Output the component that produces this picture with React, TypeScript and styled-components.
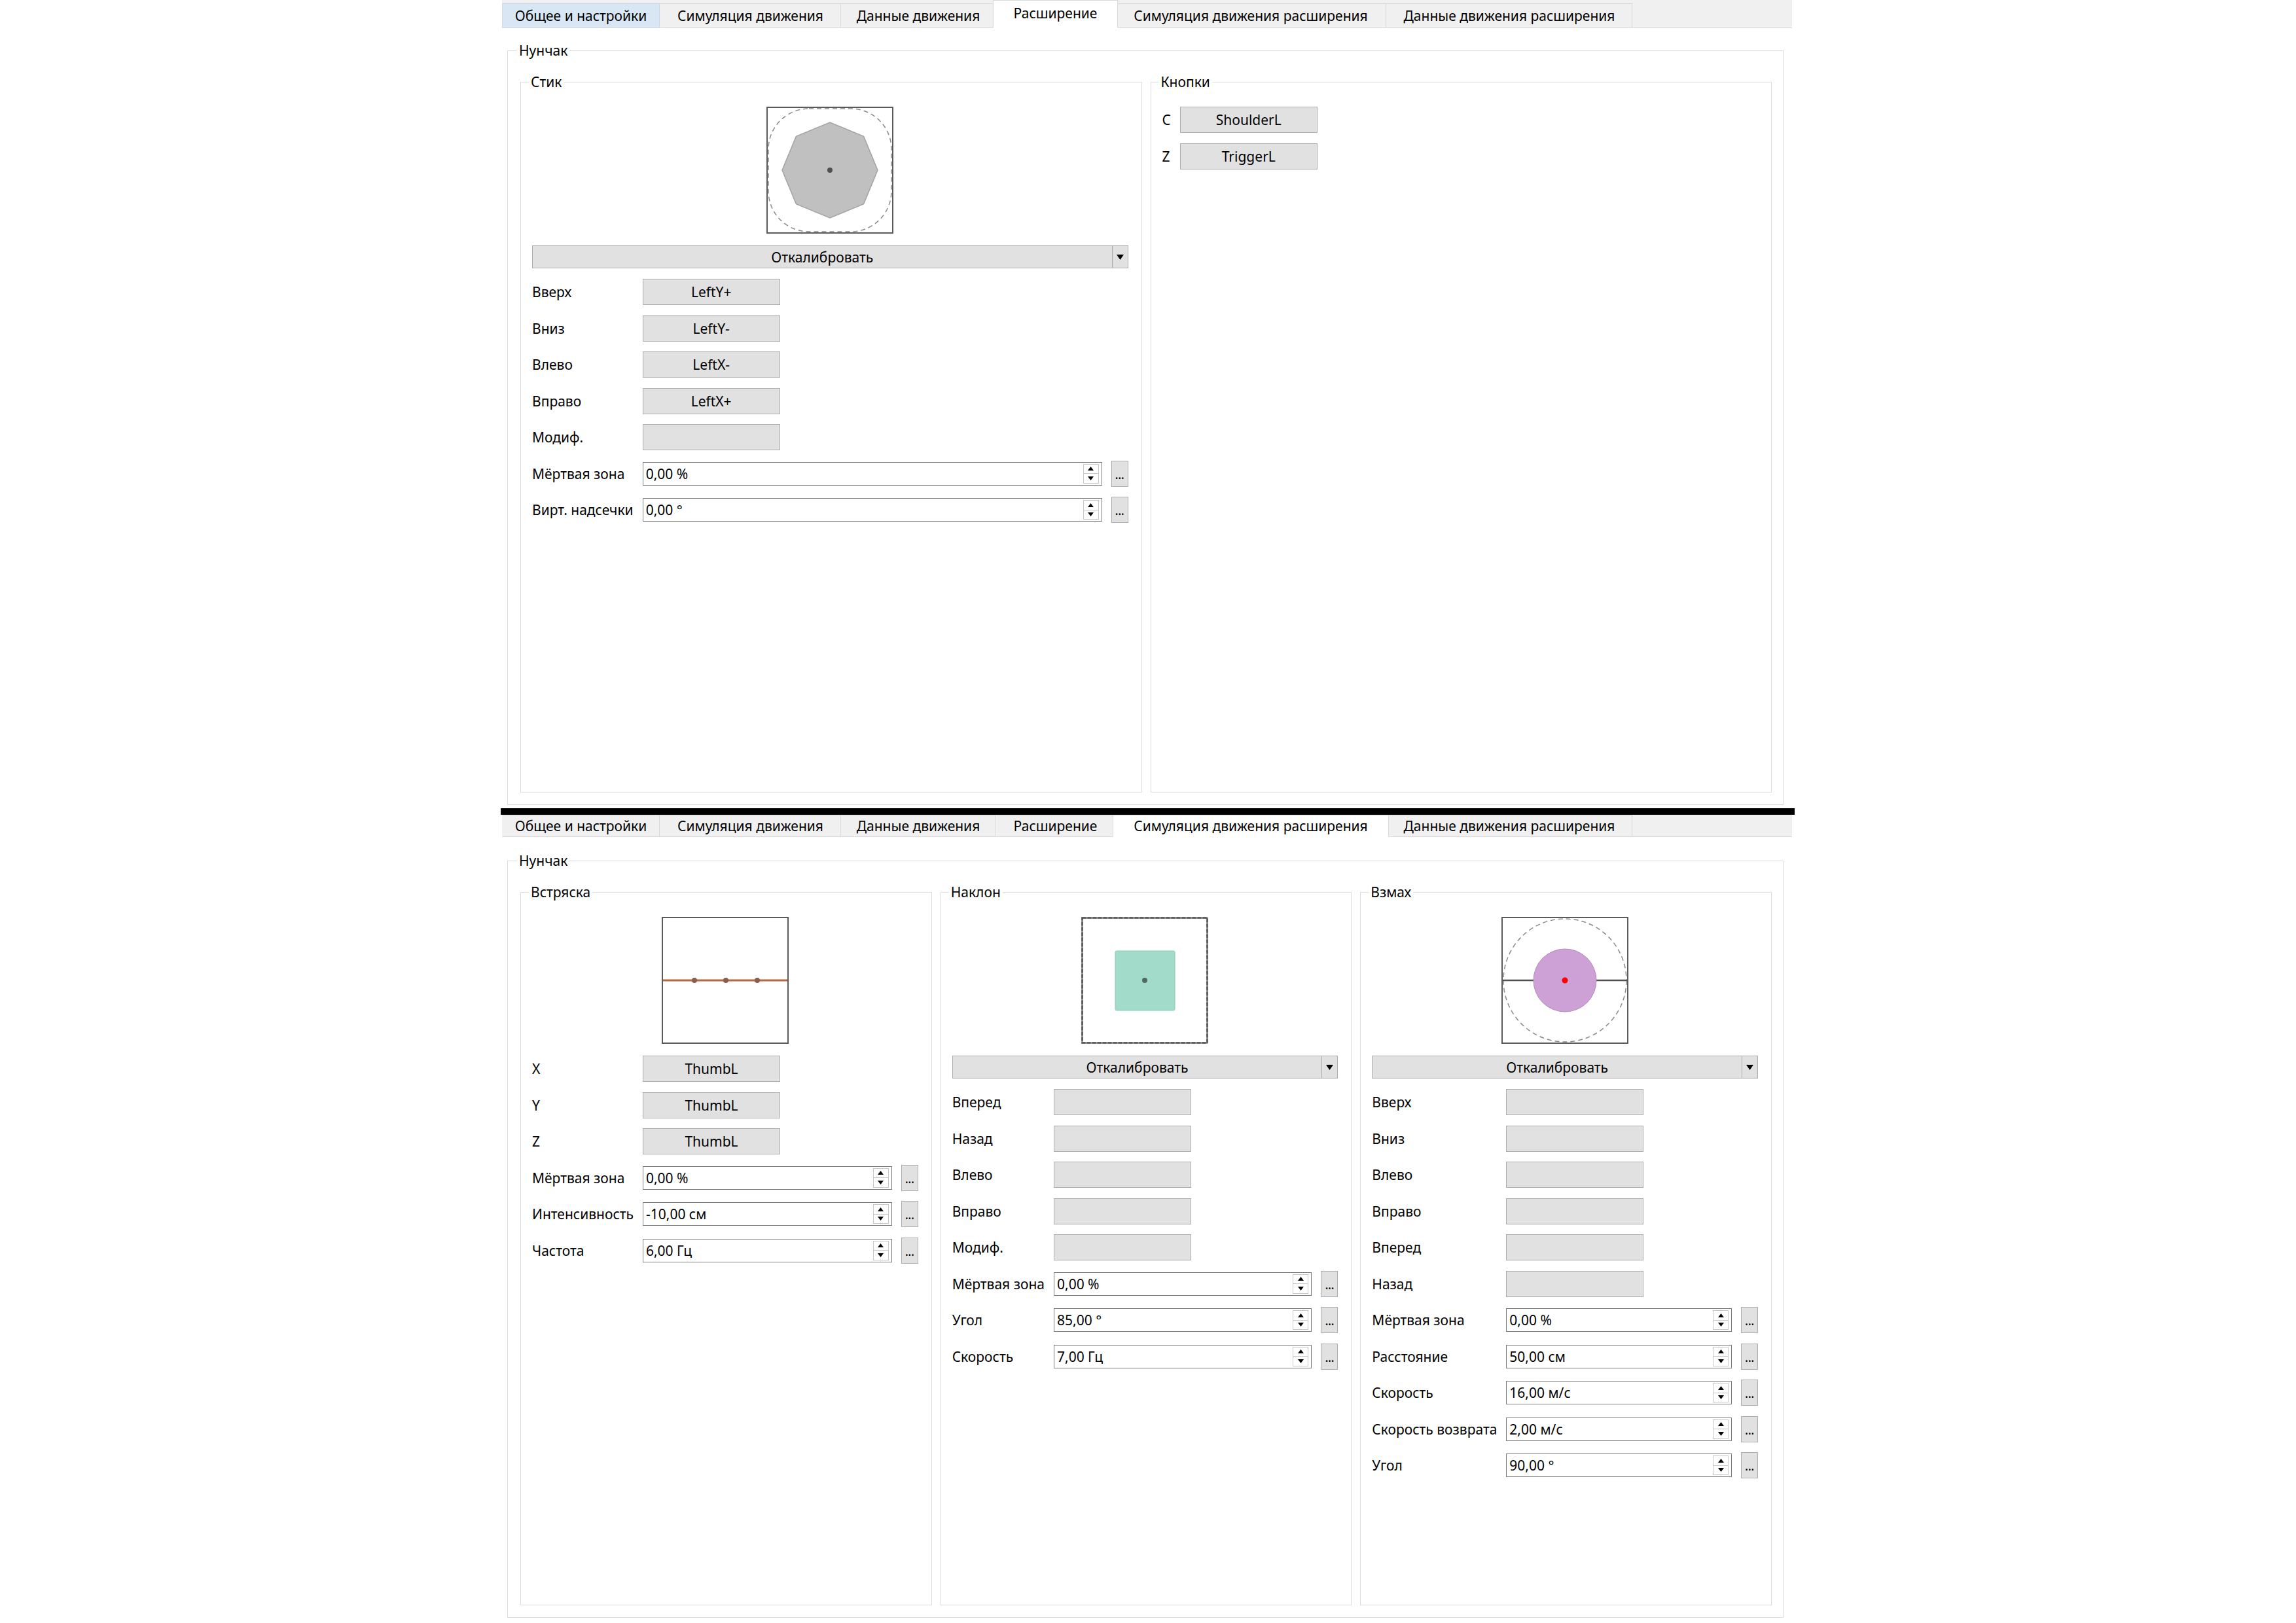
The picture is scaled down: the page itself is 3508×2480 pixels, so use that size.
import React from "react";
import styled, { createGlobalStyle } from "styled-components";

const Global = createGlobalStyle`
  html, body { margin: 0; padding: 0; background: #fff; }
  body {
    font-family: "Noto Sans", "Open Sans", sans-serif;
    font-size: 21px;
    color: #000;
  }
  * { box-sizing: border-box; }
`;

const Page = styled.div`
  width: 1977px;
  margin-left: 765px;
  display: flex;
  flex-direction: column;
`;

const Screen = styled.section`
  height: 1235px;
  padding: 0 4px 0 2px;
  display: flex;
  flex-direction: column;
`;

const Divider = styled.div`
  height: 10px;
  background: #000;
  flex: none;
`;

const TabBar = styled.div<{ $h: number }>`
  height: ${(p) => p.$h}px;
  flex: none;
  background: #f0f0f0;
  display: flex;
  align-items: flex-end;
  overflow: hidden;
  box-shadow: inset 0 -1px 0 #d9d9d9;
`;

const Tab = styled.div<{ $w: number; $h: number; $active?: boolean; $hover?: boolean }>`
  flex: none;
  width: ${(p) => p.$w + (p.$active ? 8 : 0)}px;
  margin: 0 ${(p) => (p.$active ? -4 : 0)}px;
  height: ${(p) => p.$h}px;
  display: flex;
  align-items: center;
  justify-content: center;
  padding-bottom: ${(p) => (p.$active && p.$h > 40 ? 3 : 0)}px;
  white-space: nowrap;
  background: ${(p) => (p.$active ? "#fff" : p.$hover ? "#d9e7f4" : "#f0f0f0")};
  border-top: 1px solid ${(p) => (p.$hover ? "#c4d9ee" : "#d9d9d9")};
  border-right: 1px solid ${(p) => (p.$hover ? "#c4d9ee" : "#d9d9d9")};
  border-left: 1px solid ${(p) => (p.$active || p.$hover ? "#d9d9d9" : "transparent")};
  border-bottom: 1px solid ${(p) => (p.$active ? "#fff" : "#d9d9d9")};
  position: relative;
  z-index: ${(p) => (p.$active ? 1 : 0)};
`;

const Content = styled.div<{ $pt: number; $pb: number }>`
  flex: 1;
  min-height: 0;
  background: #fff;
  padding: ${(p) => p.$pt}px 13px ${(p) => p.$pb}px 8px;
  display: flex;
`;

const Group = styled.fieldset<{ $pad: string }>`
  flex: 1;
  margin: 0;
  min-width: 0;
  border: 1px solid #dcdcdc;
  padding: ${(p) => p.$pad};
  display: flex;
  flex-direction: column;
`;

const Legend = styled.legend`
  padding: 0 3px;
  margin-left: -5px;
  line-height: 24px;
  font-size: 21px;
`;

const Columns = styled.div<{ $n: number }>`
  flex: 1;
  display: grid;
  grid-template-columns: repeat(${(p) => p.$n}, 1fr);
  column-gap: 13px;
`;

const DiagramWrap = styled.div`
  display: flex;
  justify-content: center;
  margin-bottom: 18px;
  svg { display: block; }
`;

const Calibrate = styled.div`
  height: 35px;
  margin-bottom: 16px;
  display: flex;
  background: #e1e1e1;
  border: 1px solid #adadad;
`;

const CalibrateText = styled.span`
  flex: 1;
  display: flex;
  align-items: center;
  justify-content: center;
`;

const CalibrateArrow = styled.span`
  width: 24px;
  flex: none;
  display: flex;
  align-items: center;
  justify-content: center;
  border-left: 1px solid #adadad;
`;

const Form = styled.div`
  display: grid;
  grid-template-columns: auto 1fr auto;
  grid-auto-rows: 40px;
  column-gap: 14px;
  row-gap: 15.5px;
  align-items: center;
`;

const Label = styled.span`
  white-space: nowrap;
`;

const MapButton = styled.div`
  justify-self: start;
  width: 210px;
  height: 40px;
  background: #e1e1e1;
  border: 1px solid #adadad;
  display: flex;
  align-items: center;
  justify-content: center;
`;

const SpinBox = styled.div`
  height: 36px;
  border: 1px solid #7a7a7a;
  background: #fff;
  display: flex;
  align-items: center;
  padding-left: 4px;
`;

const SpinValue = styled.span`
  flex: 1;
  white-space: nowrap;
`;

const SpinButtons = styled.div`
  width: 24px;
  height: 30px;
  margin-right: 4px;
  display: flex;
  flex-direction: column;
  border: 1px solid #c8c8c8;
`;

const SpinCell = styled.span`
  flex: 1;
  display: flex;
  align-items: center;
  justify-content: center;
  & + & { border-top: 1px solid #c8c8c8; }
`;

const DotsButton = styled.div`
  width: 26px;
  height: 40px;
  background: #e1e1e1;
  border: 1px solid #adadad;
  display: flex;
  align-items: flex-end;
  justify-content: center;
  padding-bottom: 8px;
  font-size: 19px;
  line-height: 19px;
  letter-spacing: -0.5px;
`;

const Empty = styled.span``;

type Row = { kind: "btn" | "spin"; label: string; value: string };
type DiagramKind = "stick" | "shake" | "tilt" | "swing";
interface GroupData {
  title: string;
  diagram?: DiagramKind;
  calibrate?: boolean;
  rows: Row[];
}

const Tri = ({ up, w = 9, h = 6 }: { up?: boolean; w?: number; h?: number }) => (
  <svg width={w} height={h} viewBox={`0 0 ${w} ${h}`}>
    <polygon points={up ? `0,${h} ${w},${h} ${w / 2},0` : `0,0 ${w},0 ${w / 2},${h}`} fill="#000" />
  </svg>
);

const octagon = Array.from({ length: 8 }, (_, i) => {
  const a = (Math.PI / 4) * i - Math.PI / 2;
  return `${(97 + 73 * Math.cos(a)).toFixed(1)},${(97 + 73 * Math.sin(a)).toFixed(1)}`;
}).join(" ");

const Diagram = ({ kind }: { kind: DiagramKind }) => {
  if (kind === "stick")
    return (
      <svg width="194" height="194" viewBox="0 0 194 194">
        <rect x="1" y="1" width="192" height="192" fill="#fff" stroke="#5a5a5a" strokeWidth="2" />
        <rect x="3" y="3" width="188" height="188" rx="62" fill="none" stroke="#8a8a8a" strokeWidth="1.5" strokeDasharray="7 5" />
        <polygon points={octagon} fill="#c0c0c0" stroke="#a4a4a4" strokeWidth="1.5" />
        <circle cx="97" cy="97" r="4" fill="#505050" />
      </svg>
    );
  if (kind === "shake")
    return (
      <svg width="194" height="194" viewBox="0 0 194 194">
        <rect x="1" y="1" width="192" height="192" fill="#fff" stroke="#5a5a5a" strokeWidth="2" />
        <line x1="2" y1="97" x2="192" y2="97" stroke="#b5683f" strokeWidth="3" />
        {[50, 98, 146].map((x) => (
          <circle key={x} cx={x} cy="97" r="4" fill="#8a5e4c" />
        ))}
      </svg>
    );
  if (kind === "tilt")
    return (
      <svg width="194" height="194" viewBox="0 0 194 194">
        <rect x="1.5" y="1.5" width="191" height="191" fill="#fff" stroke="#8a8a8a" strokeWidth="2.5" />
        <rect x="1.5" y="1.5" width="191" height="191" fill="none" stroke="#555" strokeWidth="2.5" strokeDasharray="6 2" />
        <rect x="52" y="52" width="91" height="91" rx="2" fill="#a3dbcb" stroke="#8ccab8" strokeWidth="1" />
        <circle cx="97" cy="97" r="4" fill="#4d6b62" />
      </svg>
    );
  return (
    <svg width="194" height="194" viewBox="0 0 194 194">
      <rect x="1" y="1" width="192" height="192" fill="#fff" stroke="#5a5a5a" strokeWidth="2" />
      <circle cx="97" cy="97" r="94" fill="none" stroke="#8a8a8a" strokeWidth="1.5" strokeDasharray="7 5" />
      <line x1="2" y1="97" x2="192" y2="97" stroke="#505050" strokeWidth="2.5" />
      <circle cx="97" cy="97" r="48" fill="#cda1d6" stroke="#b38abd" strokeWidth="1" />
      <circle cx="97" cy="97" r="4.5" fill="#ff0000" />
    </svg>
  );
};

const GroupBox = ({ g }: { g: GroupData }) => (
  <Group $pad="26px 20px 16px 17px">
    <Legend>{g.title}</Legend>
    {g.diagram && (
      <DiagramWrap>
        <Diagram kind={g.diagram} />
      </DiagramWrap>
    )}
    {g.calibrate && (
      <Calibrate>
        <CalibrateText>Откалибровать</CalibrateText>
        <CalibrateArrow>
          <Tri w={11} h={8} />
        </CalibrateArrow>
      </Calibrate>
    )}
    <Form>
      {g.rows.map((r, i) => (
        <React.Fragment key={i}>
          <Label>{r.label}</Label>
          {r.kind === "btn" ? (
            <>
              <MapButton>{r.value}</MapButton>
              <Empty />
            </>
          ) : (
            <>
              <SpinBox>
                <SpinValue>{r.value}</SpinValue>
                <SpinButtons>
                  <SpinCell>
                    <Tri up />
                  </SpinCell>
                  <SpinCell>
                    <Tri />
                  </SpinCell>
                </SpinButtons>
              </SpinBox>
              <DotsButton>...</DotsButton>
            </>
          )}
        </React.Fragment>
      ))}
    </Form>
  </Group>
);

const TABS: { name: string; w: number }[] = [
  { name: "Общее и настройки", w: 241 },
  { name: "Симуляция движения", w: 277 },
  { name: "Данные движения", w: 236 },
  { name: "Расширение", w: 183 },
  { name: "Симуляция движения расширения", w: 414 },
  { name: "Данные движения расширения", w: 376 },
];

const btn = (label: string, value = ""): Row => ({ kind: "btn", label, value });
const spin = (label: string, value: string): Row => ({ kind: "spin", label, value });

const TOP: GroupData[] = [
  {
    title: "Стик",
    diagram: "stick",
    calibrate: true,
    rows: [
      btn("Вверх", "LeftY+"),
      btn("Вниз", "LeftY-"),
      btn("Влево", "LeftX-"),
      btn("Вправо", "LeftX+"),
      btn("Модиф."),
      spin("Мёртвая зона", "0,00 %"),
      spin("Вирт. надсечки", "0,00 °"),
    ],
  },
  {
    title: "Кнопки",
    rows: [btn("C", "ShoulderL"), btn("Z", "TriggerL")],
  },
];

const BOTTOM: GroupData[] = [
  {
    title: "Встряска",
    diagram: "shake",
    rows: [
      btn("X", "ThumbL"),
      btn("Y", "ThumbL"),
      btn("Z", "ThumbL"),
      spin("Мёртвая зона", "0,00 %"),
      spin("Интенсивность", "-10,00 см"),
      spin("Частота", "6,00 Гц"),
    ],
  },
  {
    title: "Наклон",
    diagram: "tilt",
    calibrate: true,
    rows: [
      btn("Вперед"),
      btn("Назад"),
      btn("Влево"),
      btn("Вправо"),
      btn("Модиф."),
      spin("Мёртвая зона", "0,00 %"),
      spin("Угол", "85,00 °"),
      spin("Скорость", "7,00 Гц"),
    ],
  },
  {
    title: "Взмах",
    diagram: "swing",
    calibrate: true,
    rows: [
      btn("Вверх"),
      btn("Вниз"),
      btn("Влево"),
      btn("Вправо"),
      btn("Вперед"),
      btn("Назад"),
      spin("Мёртвая зона", "0,00 %"),
      spin("Расстояние", "50,00 см"),
      spin("Скорость", "16,00 м/с"),
      spin("Скорость возврата", "2,00 м/с"),
      spin("Угол", "90,00 °"),
    ],
  },
];

const Panel = ({
  active,
  hover,
  barH,
  pt,
  pb,
  groups,
}: {
  active: number;
  hover?: number;
  barH: number;
  pt: number;
  pb: number;
  groups: GroupData[];
}) => (
  <Screen>
    <TabBar $h={barH}>
      {TABS.map((t, i) => (
        <Tab
          key={t.name}
          $w={t.w}
          $h={i === active ? barH : Math.min(38, barH)}
          $active={i === active}
          $hover={i === hover}
        >
          {t.name}
        </Tab>
      ))}
    </TabBar>
    <Content $pt={pt} $pb={pb}>
      <Group $pad="24px 17px 18px 19px">
        <Legend>Нунчак</Legend>
        <Columns $n={groups.length}>
          {groups.map((g) => (
            <GroupBox key={g.title} g={g} />
          ))}
        </Columns>
      </Group>
    </Content>
  </Screen>
);

export default function App() {
  return (
    <>
      <Global />
      <Page>
        <Panel active={3} hover={0} barH={43} pt={22} pb={5} groups={TOP} />
        <Divider />
        <Panel active={4} barH={34} pt={24} pb={8} groups={BOTTOM} />
      </Page>
    </>
  );
}
